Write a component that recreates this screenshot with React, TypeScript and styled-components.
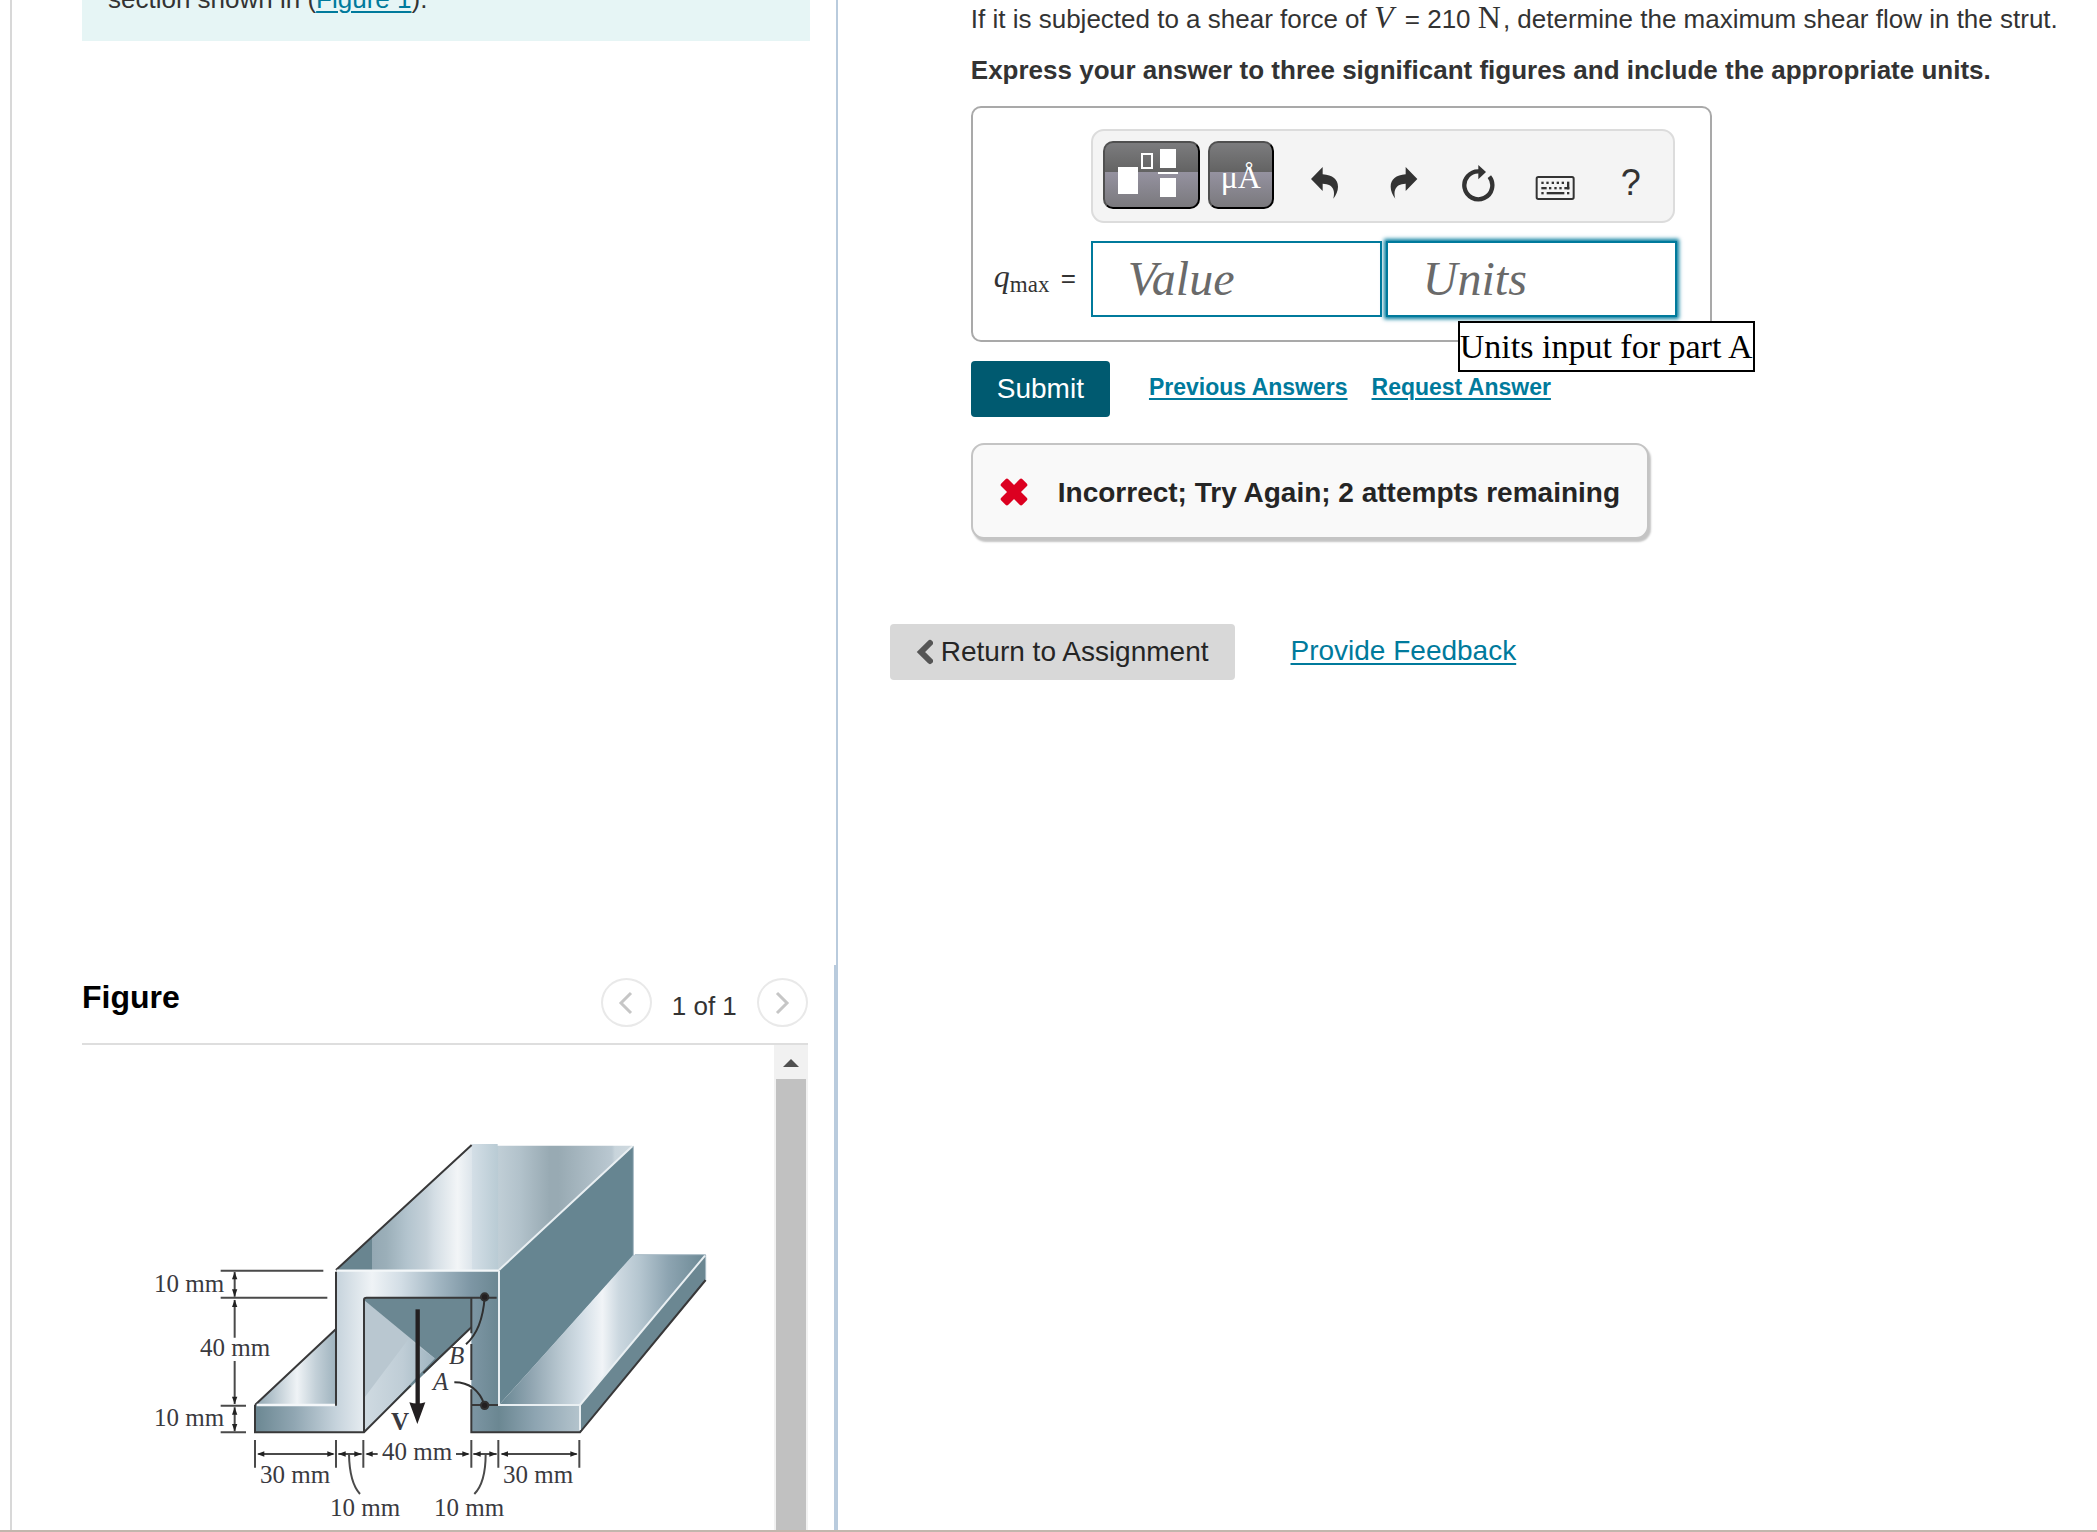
import React from "react";
import styled, { createGlobalStyle } from "styled-components";

const sans = `"Liberation Sans", Arial, sans-serif`;
const serif = `"Liberation Serif", "Times New Roman", serif`;
const teal = "#007a9c";

const GlobalStyle = createGlobalStyle`
  * { box-sizing: border-box; }
  body { margin: 0; background: #fff; color: #333; font-family: ${sans}; font-size: 26px; }
  button, input { font: inherit; }
`;

const Page = styled.div`
  display: flex;
  height: 100vh;
  overflow: hidden;
  border-bottom: 2px solid #c2b6ad;
`;

const LeftPane = styled.aside`
  flex: 0 0 calc(40% - 11px);
  display: flex;
  flex-direction: column;
  min-width: 0;
  margin-left: 10px;
  border-left: 2px solid #d8d8d8;
`;

const ProblemPane = styled.section`
  flex: 1;
  min-height: 0;
  overflow: hidden;
  padding: 0 26px 0 70px;
  border-right: 2px solid #b9cbdd;
`;

const Intro = styled.div`
  margin-top: -19px;
  padding: 0 26px 24px;
  background: #e6f5f5;
  line-height: 36px;
`;

const TextLink = styled.a<{ $size?: number; $bold?: boolean }>`
  color: ${teal};
  font-size: ${(p) => p.$size ?? 26}px;
  font-weight: ${(p) => (p.$bold ? 700 : 400)};
  text-decoration: underline;
  text-decoration-thickness: 2px;
  text-underline-offset: 3px;
`;

const FigurePane = styled.section`
  flex: none;
  padding: 0 26px 0 70px;
  border-right: 4px solid #b9cbdd;
`;

const FigureHeader = styled.header`
  display: flex;
  align-items: flex-start;
  justify-content: space-between;
  height: 80px;
  padding-top: 13px;
  border-bottom: 2px solid #dedede;
`;

const FigureTitle = styled.h2`
  margin: 0;
  color: #000;
  font-size: 32px;
  line-height: 38px;
`;

const Pager = styled.nav`
  display: flex;
  align-items: center;
  gap: 20px;
`;

const PagerCount = styled.span`
  padding-top: 6px;
  line-height: 36px;
`;

const PagerButton = styled.button`
  display: grid;
  place-items: center;
  width: 51px;
  height: 49px;
  padding: 0;
  border: 2px solid #e9e9e9;
  border-radius: 50%;
  background: #fff;
`;

const FigureBody = styled.div`
  display: flex;
  height: 485px;
`;

const FigureCanvas = styled.div`
  flex: 1;
  min-width: 0;
`;

const Scrollbar = styled.div`
  flex: 0 0 34px;
  display: flex;
  flex-direction: column;
  background: #f1f1f1;
`;

const ScrollUp = styled.button`
  display: grid;
  place-items: center;
  height: 34px;
  padding: 2px 0 0;
  border: 0;
  background: transparent;
`;

const ScrollThumb = styled.div`
  flex: 1;
  margin: 0 2px;
  background: #c1c1c1;
`;

const RightPane = styled.main`
  flex: 1;
  min-width: 0;
  padding: 1px 20px 0 52px;
`;

const Part = styled.section`
  margin-left: 81px;
`;

const Prompt = styled.p<{ $bold?: boolean }>`
  margin: 0 0 15px;
  line-height: 36px;
  font-weight: ${(p) => (p.$bold ? 700 : 400)};
`;

const MathText = styled.span<{ $italic?: boolean; $size: number; $gap?: number }>`
  margin-right: ${(p) => p.$gap ?? 0}px;
  font-family: ${serif};
  font-size: ${(p) => p.$size}px;
  font-style: ${(p) => (p.$italic ? "italic" : "normal")};
  line-height: 1;
`;

const Subscript = styled.sub`
  vertical-align: -5px;
  line-height: 0;
`;

const AnswerBox = styled.div`
  display: grid;
  grid-template-columns: 97px auto;
  row-gap: 18px;
  width: fit-content;
  margin-top: 18px;
  padding: 21px 33px 23px 21px;
  border: 2px solid #a9a9a9;
  border-radius: 10px;
`;

const Toolbar = styled.div`
  grid-column: 2;
  display: flex;
  gap: 8px;
  width: 584px;
  height: 94px;
  padding: 10px 4px 10px 10px;
  border: 2px solid #dcdcdc;
  border-radius: 13px;
  background: #f4f4f4;
`;

const PaletteButton = styled.button<{ $width: number }>`
  flex: none;
  width: ${(p) => p.$width}px;
  height: 68px;
  padding: 0;
  border: 2px solid;
  border-color: #505050 #000 #000 #505050;
  border-radius: 10px;
  background: linear-gradient(#7c7c7e, #636363 45%, #9592a0 45%, #7a797d);
  color: #fff;
  font-family: ${serif};
  font-size: 32px;
  line-height: 68px;
`;

const IconRow = styled.div`
  flex: 1;
  display: flex;
  height: 84px;
  padding-left: 6px;
`;

const IconButton = styled.button`
  flex: 1;
  display: grid;
  place-items: center;
  padding: 0;
  border: 0;
  background: transparent;
  color: #333;
  font-size: 36px;
`;

const FieldLabel = styled.label`
  align-self: center;
  padding-bottom: 2px;
  white-space: nowrap;
`;

const FieldRow = styled.div`
  display: flex;
  gap: 4px;
`;

const FieldWrap = styled.div`
  position: relative;
`;

const Field = styled.input<{ $active?: boolean }>`
  display: block;
  width: 291px;
  height: 76px;
  padding: 0 35px 2px;
  border: 2px solid ${teal};
  border-radius: 0;
  outline: 0;
  background: #fff;
  box-shadow: ${(p) => (p.$active ? `0 0 4px 2px ${teal}` : "none")};
  font-family: ${serif};
  font-size: 48px;
  font-style: italic;
  &::placeholder { color: #6a6a6a; opacity: 1; }
`;

const Tooltip = styled.div`
  position: absolute;
  z-index: 1;
  top: 80px;
  left: 72px;
  border: 2px solid #000;
  background: #fff;
  color: #000;
  font-family: ${serif};
  font-size: 34px;
  line-height: 47px;
  white-space: nowrap;
`;

const ActionRow = styled.div`
  display: flex;
  align-items: center;
  margin-top: 19px;
`;

const SubmitButton = styled.button`
  height: 56px;
  margin-right: 39px;
  padding: 0 26px;
  border: 0;
  border-radius: 4px;
  background: #005a70;
  color: #fff;
  font-size: 28px;
`;

const LinkGroup = styled.div`
  display: flex;
  gap: 24px;
  padding-bottom: 3px;
`;

const Feedback = styled.div`
  display: flex;
  align-items: center;
  gap: 30px;
  width: fit-content;
  height: 96px;
  margin-top: 26px;
  padding: 4px 27px 2px;
  border: 2px solid #c4c4c4;
  border-radius: 13px;
  background: #f9f9f9;
  box-shadow: 2px 3px 2px #c4c4c4;
  color: #252525;
  font-size: 28px;
  font-weight: 700;
  line-height: 36px;
`;

const FeedbackText = styled.span`
  padding-top: 2px;
`;

const FooterRow = styled.div`
  display: flex;
  align-items: center;
  gap: 56px;
  margin-top: 85px;
`;

const ReturnButton = styled.button`
  display: flex;
  align-items: center;
  gap: 8px;
  height: 56px;
  padding: 0 26px;
  border: 0;
  border-radius: 4px;
  background: #d8d8d8;
  color: #252525;
  font-size: 28px;
`;

const Chevron = ({ right }: { right?: boolean }) => (
  <svg width="16" height="24" viewBox="0 0 16 24" fill="none" stroke="#c6c6c6" strokeWidth="3">
    <path d={right ? "M3 2L13 12L3 22" : "M13 2L3 12L13 22"} />
  </svg>
);

const BlockSvg = styled.svg`
  display: block;
`;

const TemplatesIcon = () => (
  <BlockSvg width="93" height="64" viewBox="0 0 93 64" fill="#fff">
    <rect x="13" y="24" width="20" height="27" />
    <rect x="37" y="11" width="10" height="14" fill="none" stroke="#fff" strokeWidth="2" />
    <rect x="55" y="6" width="16" height="19" />
    <rect x="53" y="29" width="20" height="2" />
    <rect x="55" y="35" width="16" height="19" />
  </BlockSvg>
);

const Glyph = ({ children }: { children: React.ReactNode }) => (
  <svg width="40" height="40" viewBox="0 0 120 120" fill="#333">
    {children}
  </svg>
);

const keys: [number, number, number, number][] = [
  [19, 56, 7, 7], [34, 56, 7, 7], [50, 56, 7, 7], [65, 56, 7, 7], [80, 56, 7, 7], [96, 56, 7, 23],
  [19, 72, 16, 7], [42, 72, 7, 7], [58, 72, 7, 7], [73, 72, 7, 7], [88, 72, 15, 7],
  [19, 87, 7, 7], [35, 87, 53, 7], [96, 87, 7, 7],
];

const outerTop: [number, string][] = [
  [0, "#698590"], [12.2, "#698590"], [12.3, "#94a8b3"], [17, "#9bafb9"], [24, "#b3c4ce"],
  [30.5, "#c6d2da"], [33, "#d3dde4"], [41, "#f2f5f7"], [45.8, "#dde5eb"], [46, "#d3dee6"],
  [54.6, "#b9cbd4"], [54.8, "#c0ced6"], [62, "#b2c2cb"], [72, "#98aab3"], [75, "#98aab3"],
  [93, "#bac8d1"], [94, "#c8d4db"], [100, "#d0dae0"],
];
const front: [number, string][] = [
  [0, "#6b8792"], [12, "#90a6b2"], [25, "#c6d3dc"], [36, "#eff3f6"], [45, "#d2dde5"],
  [56, "#a3b7c3"], [66.5, "#7d96a4"], [75, "#6b8792"], [86, "#8da4b1"], [100, "#b4c4cd"],
];
const flange: [number, string][] = [
  [0, "#668591"], [15, "#8fa4b0"], [30, "#b9c8d1"], [40, "#d3dee6"], [50, "#f1f4f7"],
  [58, "#ccd8e0"], [68, "#b5c6d0"], [82, "#8da4b1"], [100, "#6b8894"],
];
const leftFlange: [number, string][] = [
  [0, "#8fa5b0"], [20, "#b2c2cb"], [52, "#eff3f6"], [75, "#c3d0d8"], [100, "#9fb3be"],
];

const Gradient = ({ id, from, to, stops }: { id: string; from: number; to: number; stops: [number, string][] }) => (
  <linearGradient id={id} gradientUnits="userSpaceOnUse" x1={from} x2={to} y1="0" y2="0">
    {stops.map(([at, color]) => (
      <stop key={at} offset={`${at}%`} stopColor={color} />
    ))}
  </linearGradient>
);

const Head = ({ x, y, turn }: { x: number; y: number; turn: number }) => (
  <path d="M0 0L-22 -8L-22 8Z" fill="#222" stroke="none" transform={`translate(${x} ${y}) rotate(${turn})`} />
);

const dims: [number, number, string][] = [
  [72, 247, "10 mm"], [118, 311, "40 mm"], [72, 381, "10 mm"],
  [178, 438, "30 mm"], [300, 415, "40 mm"], [421, 438, "30 mm"],
  [248, 471, "10 mm"], [352, 471, "10 mm"],
];

const StrutDrawing = () => (
  <svg width="692" height="485" viewBox="0 0 692 485" role="img" aria-label="Strut cross section">
    <defs>
      <Gradient id="top" from={648} to={1538} stops={outerTop} />
      <Gradient id="front" from={405} to={1380} stops={front} />
      <Gradient id="flange" from={1137} to={1757} stops={flange} />
      <Gradient id="left" from={405} to={648} stops={leftFlange} />
      <Gradient id="band" from={732} to={944} stops={[[0, "#cfdae1"], [55, "#bfcdd6"], [100, "#9fb4c0"]]} />
    </defs>
    <g transform="translate(38 75) scale(0.33333)" fill="none" strokeWidth="6">
      <path d="M648 450L1055 75V72H1133V77H1537L1137 450Z" fill="url(#top)" />
      <path d="M1137 450L1540 77V407L1137 855Z" fill="#668591" />
      <path d="M1137 855L1540 404H1757L1380 855Z" fill="url(#flange)" />
      <path d="M1380 855L1757 405V480L1380 937Z" fill="#6b8792" />
      <path d="M405 855L648 627V855Z" fill="url(#left)" />
      <path d="M732 533H1054V625L732 937Z" fill="#6b8792" />
      <path d="M732 540L944 715L732 937Z" fill="#b9c7d0" />
      <path d="M865 658L944 715L732 937V835Z" fill="url(#band)" />
      <path
        d="M648 452H1137V855H1380V937H1054V533H732V937H405V855H648Z"
        fill="url(#front)"
      />
      <g stroke="#383839">
        <path d="M648 450L1055 75M648 455V857M405 855L648 627M405 855V937H732L872 797M910 759L1054 622" />
        <path d="M732 937V540Q732 533 740 533H1130M1054 533V640M1054 672V780M1054 808V937H1380L1757 480M1054 855H1137" />
      </g>
      <path d="M1540 80V407M1545 404H1757M1757 405V480" stroke="#a9bbc5" strokeWidth="3" />
      <path d="M410 855H645M650 452H1137" stroke="#f4f7f9" strokeWidth="7" />
      <path d="M1137 452V855H1380V930M1137 450L1537 79M1380 855L1755 407" stroke="#e9eff2" strokeWidth="6" />
      <g stroke="#303030">
        <path d="M1094 531C1090 590 1075 640 1038 673M1003 787Q1070 787 1094 856" />
        <circle cx="1094" cy="531" r="11" fill="#231f20" />
        <circle cx="1094" cy="856" r="11" fill="#231f20" />
      </g>
      <path d="M893 568V855" stroke="#231f20" strokeWidth="13" />
      <path d="M868 847Q892 854 916 847L892 912Z" fill="#231f20" />
      <g stroke="#4a4a4a" strokeWidth="6">
        <path d="M302 452H610M302 533H622M302 857H378M302 937H378" />
        <path d="M344 456V530M344 540V653M344 723V852M344 862V934" />
        <path d="M405 960V1043M648 960V1043M730 960V1043M1054 960V1043M1135 960V1043M1378 960V1043" />
        <path d="M415 1002H640M655 1002H725M740 1002H773M1008 1002H1045M1060 1002H1130M1145 1002H1370" />
        <path d="M687 1002C688 1060 700 1100 720 1122M1097 1002C1097 1060 1085 1100 1063 1122" />
        <Head x={344} y={456} turn={-90} />
        <Head x={344} y={530} turn={90} />
        <Head x={344} y={539} turn={-90} />
        <Head x={344} y={852} turn={90} />
        <Head x={344} y={862} turn={-90} />
        <Head x={344} y={934} turn={90} />
        <Head x={411} y={1002} turn={180} />
        <Head x={644} y={1002} turn={0} />
        <Head x={655} y={1002} turn={180} />
        <Head x={725} y={1002} turn={0} />
        <Head x={736} y={1002} turn={180} />
        <Head x={1049} y={1002} turn={0} />
        <Head x={1060} y={1002} turn={180} />
        <Head x={1130} y={1002} turn={0} />
        <Head x={1142} y={1002} turn={180} />
        <Head x={1373} y={1002} turn={0} />
      </g>
    </g>
    <g fontFamily={serif} fontSize="25" fill="#3a3a3f">
      {dims.map(([x, y, label]) => (
        <text key={`${x}-${y}`} x={x} y={y}>
          {label}
        </text>
      ))}
      <text x="367" y="319" fontStyle="italic">B</text>
      <text x="351" y="345" fontStyle="italic">A</text>
      <text x="309" y="385" fontWeight="700">V</text>
    </g>
  </svg>
);

export default function App() {
  return (
    <>
      <GlobalStyle />
      <Page>
        <LeftPane>
          <ProblemPane>
            <Intro>
              section shown in (<TextLink href="#figure">Figure 1</TextLink>).
            </Intro>
          </ProblemPane>
          <FigurePane id="figure">
            <FigureHeader>
              <FigureTitle>Figure</FigureTitle>
              <Pager aria-label="Figure pages">
                <PagerButton aria-label="Previous figure">
                  <Chevron />
                </PagerButton>
                <PagerCount>1 of 1</PagerCount>
                <PagerButton aria-label="Next figure">
                  <Chevron right />
                </PagerButton>
              </Pager>
            </FigureHeader>
            <FigureBody>
              <FigureCanvas>
                <StrutDrawing />
              </FigureCanvas>
              <Scrollbar>
                <ScrollUp aria-label="Scroll up">
                  <svg width="16" height="8" viewBox="0 0 16 8">
                    <path d="M0 8L8 0L16 8Z" fill="#505050" />
                  </svg>
                </ScrollUp>
                <ScrollThumb />
              </Scrollbar>
            </FigureBody>
          </FigurePane>
        </LeftPane>

        <RightPane>
          <Part>
            <Prompt>
              If it is subjected to a shear force of <MathText $italic $size={32} $gap={4}>V</MathText> = 210{" "}
              <MathText $size={32} $gap={2}>N</MathText>, determine the maximum shear flow in the strut.
            </Prompt>
            <Prompt $bold>
              Express your answer to three significant figures and include the appropriate units.
            </Prompt>
            <AnswerBox>
              <Toolbar role="toolbar" aria-label="Answer tools">
                <PaletteButton $width={97} aria-label="Templates">
                  <TemplatesIcon />
                </PaletteButton>
                <PaletteButton $width={66}>μÅ</PaletteButton>
                <IconRow>
                  <IconButton aria-label="Undo">
                    <Glyph>
                      <path d="M15 48L50 12V34C80 36 96 50 96 71C96 84 90 96 82 107C87 88 86 63 50 62V84Z" />
                    </Glyph>
                  </IconButton>
                  <IconButton aria-label="Redo">
                    <Glyph>
                      <path d="M106 48L71 12V34C42 36 26 50 26 71C26 84 32 96 40 107C35 88 36 63 71 62V84Z" />
                    </Glyph>
                  </IconButton>
                  <IconButton aria-label="Reset">
                    <Glyph>
                      <path d="M94 41A42 42 0 1 1 63 25" fill="none" stroke="#333" strokeWidth="13" />
                      <path d="M61 6L84 27L61 49Z" />
                    </Glyph>
                  </IconButton>
                  <IconButton aria-label="Keyboard shortcuts">
                    <Glyph>
                      <rect x="5" y="42" width="111" height="66" rx="5" fill="none" stroke="#333" strokeWidth="6" />
                      {keys.map(([x, y, w, h]) => (
                        <rect key={`${x}-${y}`} x={x} y={y} width={w} height={h} />
                      ))}
                    </Glyph>
                  </IconButton>
                  <IconButton aria-label="Help">?</IconButton>
                </IconRow>
              </Toolbar>
              <FieldLabel htmlFor="value">
                <MathText $italic $size={32}>q</MathText>
                <Subscript>
                  <MathText $size={23} $gap={4}>max</MathText>
                </Subscript>{" "}
                =
              </FieldLabel>
              <FieldRow>
                <Field id="value" placeholder="Value" />
                <FieldWrap>
                  <Field $active placeholder="Units" aria-label="Units input for part A" />
                  <Tooltip role="tooltip">Units input for part A</Tooltip>
                </FieldWrap>
              </FieldRow>
            </AnswerBox>
            <ActionRow>
              <SubmitButton>Submit</SubmitButton>
              <LinkGroup>
                <TextLink $size={23} $bold href="#previous">Previous Answers</TextLink>
                <TextLink $size={23} $bold href="#request">Request Answer</TextLink>
              </LinkGroup>
            </ActionRow>
            <Feedback role="status">
              <svg width="28" height="28" viewBox="0 0 28 28" fill="#dc0020">
                <rect x="-1" y="9" width="30" height="10" rx="2" transform="rotate(45 14 14)" />
                <rect x="-1" y="9" width="30" height="10" rx="2" transform="rotate(-45 14 14)" />
              </svg>
              <FeedbackText>Incorrect; Try Again; 2 attempts remaining</FeedbackText>
            </Feedback>
          </Part>
          <FooterRow>
            <ReturnButton>
              <svg width="17" height="26" viewBox="0 0 17 26" fill="none" stroke="#555" strokeWidth="6">
                <path d="M14 4L5 13L14 22" strokeLinecap="round" />
              </svg>
              Return to Assignment
            </ReturnButton>
            <LinkGroup>
              <TextLink $size={28} href="#feedback">Provide Feedback</TextLink>
            </LinkGroup>
          </FooterRow>
        </RightPane>
      </Page>
    </>
  );
}
